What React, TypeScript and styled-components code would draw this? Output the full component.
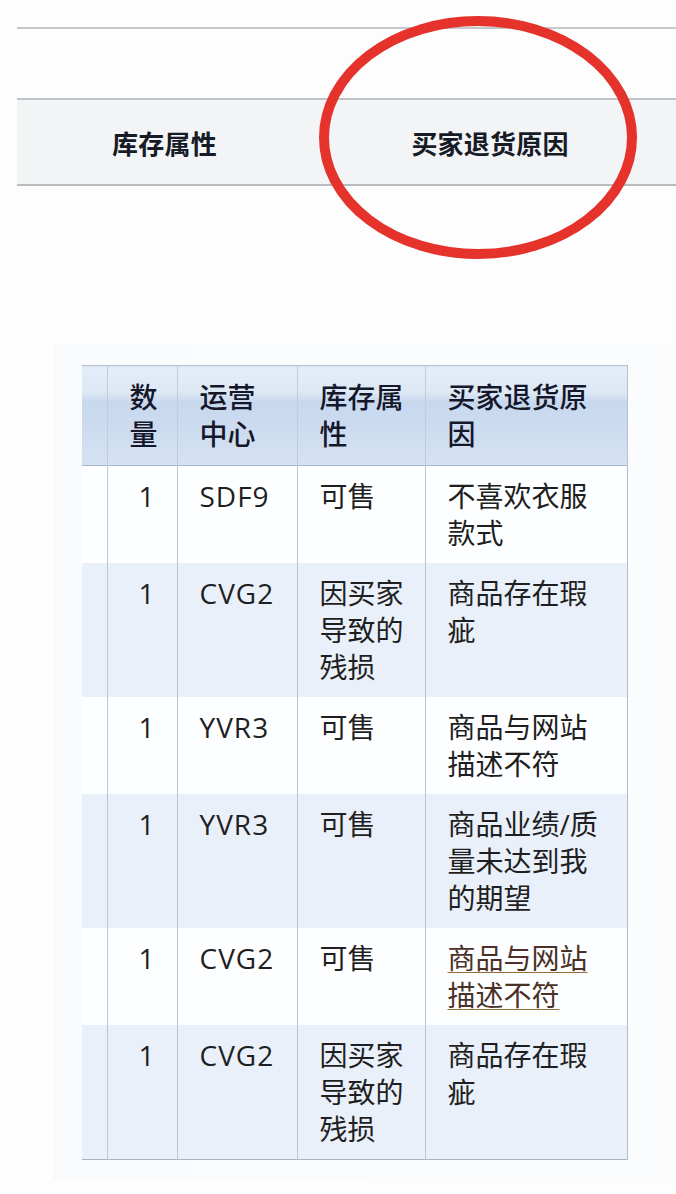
import React from "react";
import styled, { createGlobalStyle } from "styled-components";

const Global = createGlobalStyle`
  html, body {
    margin: 0;
    padding: 0;
    background: #fdfdfe;
  }
  body {
    font-family: "Noto Sans CJK SC", "Noto Sans", sans-serif;
    color: #1c1c1e;
  }
`;

const Page = styled.div`
  position: relative;
  width: 676px;
  min-height: 1194px;
  overflow: hidden;
  background: #fdfdfe;
`;

const TopSection = styled.section`
  padding: 27px 0 0 17px;
  display: flex;
  flex-direction: column;
`;

const Rule = styled.div`
  height: 2px;
  background: #c4c7cb;
`;

const Band = styled.div`
  margin-top: 69px;
  height: 84px;
  border-top: 2px solid #bfc2c6;
  border-bottom: 2px solid #b8bbc0;
  background: #f3f4f6;
  display: grid;
  grid-template-columns: 295px 356px;
  align-items: center;
`;

const BandLabel = styled.div`
  text-align: center;
  font-size: 26px;
  font-weight: 700;
  color: #161b26;
  letter-spacing: 0.2px;
`;

const Annotation = styled.svg`
  position: absolute;
  left: 0;
  top: 0;
  pointer-events: none;
`;

const Panel = styled.section`
  margin: 158px 6px 14px 53px;
  padding: 21px 0 20px 29px;
  background: linear-gradient(to right, #f8f9fa 0px, #fafbfc 20px, #fbfcfd 100%);
`;

const Table = styled.table`
  border-collapse: collapse;
  table-layout: fixed;
  width: 545px;
  font-family: "Open Sans", "Noto Sans CJK SC", sans-serif;
  font-size: 28px;
  line-height: 37px;
  color: #1f1f22;
`;

const Col = styled.col<{ $w: number }>`
  width: ${(p) => p.$w}px;
`;

const HeadRow = styled.tr`
  background: linear-gradient(
    to bottom,
    #e4edf8 0%,
    #dde8f5 26%,
    #c7d8ee 36%,
    #cbdaef 55%,
    #d5e2f3 100%
  );
  border-top: 1px solid #bac4cf;
  border-bottom: 1px solid #a9b8c9;
`;

const Th = styled.th<{ $first?: boolean; $last?: boolean; $pr?: number }>`
  padding: 12px ${(p) => p.$pr ?? 22}px 13px 22px;
  text-align: left;
  vertical-align: top;
  font-family: "Noto Sans CJK SC", sans-serif;
  font-weight: 500;
  color: #15172a;
  word-break: break-all;
  border-left: ${(p) => (p.$first ? "none" : "1px solid #c2ccd8")};
  border-right: ${(p) => (p.$last ? "1px solid #b7c1cc" : "none")};
  &:first-child {
    padding: 0;
  }
`;

const Tr = styled.tr<{ $alt?: boolean }>`
  background: ${(p) => (p.$alt ? "#e9f0fa" : "#fdfeff")};
  &:last-child {
    border-bottom: 1px solid #aab3be;
  }
`;

const Td = styled.td<{
  $first?: boolean;
  $last?: boolean;
  $align?: "left" | "right";
  $pr?: number;
}>`
  padding: 12px ${(p) => p.$pr ?? 22}px 11px 22px;
  text-align: ${(p) => p.$align ?? "left"};
  vertical-align: top;
  word-break: break-all;
  border-left: ${(p) => (p.$first ? "none" : "1px solid #bcc5d0")};
  border-right: ${(p) => (p.$last ? "1px solid #b3bcc7" : "none")};
  &:first-child {
    padding: 0;
  }
`;

const Code = styled.span`
  letter-spacing: 1px;
  white-space: nowrap;
  word-break: keep-all;
`;

const Reason = styled.span<{ $link?: boolean }>`
  color: ${(p) => (p.$link ? "#4a3127" : "inherit")};
  text-decoration: ${(p) => (p.$link ? "underline" : "none")};
  text-decoration-color: #9c6b3a;
  text-decoration-thickness: 1px;
  text-underline-offset: 3px;
`;

type Row = {
  qty: string;
  center: string;
  attr: string;
  reason: string;
  link?: boolean;
};

const rows: Row[] = [
  { qty: "1", center: "SDF9", attr: "可售", reason: "不喜欢衣服款式" },
  { qty: "1", center: "CVG2", attr: "因买家导致的残损", reason: "商品存在瑕疵" },
  { qty: "1", center: "YVR3", attr: "可售", reason: "商品与网站描述不符" },
  { qty: "1", center: "YVR3", attr: "可售", reason: "商品业绩/质量未达到我的期望" },
  { qty: "1", center: "CVG2", attr: "可售", reason: "商品与网站描述不符", link: true },
  { qty: "1", center: "CVG2", attr: "因买家导致的残损", reason: "商品存在瑕疵" },
];

export default function App() {
  return (
    <Page>
      <Global />
      <TopSection>
        <Rule />
        <Band>
          <BandLabel>库存属性</BandLabel>
          <BandLabel>买家退货原因</BandLabel>
        </Band>
      </TopSection>

      <Panel>
        <Table>
          <colgroup>
            <Col $w={25} />
            <Col $w={70} />
            <Col $w={120} />
            <Col $w={128} />
            <Col $w={202} />
          </colgroup>
          <thead>
            <HeadRow>
              <Th $first />
              <Th $pr={21}>数量</Th>
              <Th $pr={30}>运营中心</Th>
              <Th $pr={20}>库存属性</Th>
              <Th $last>买家退货原因</Th>
            </HeadRow>
          </thead>
          <tbody>
            {rows.map((r, i) => (
              <Tr key={i} $alt={i % 2 === 1}>
                <Td $first />
                <Td $align="right" $pr={22}>
                  {r.qty}
                </Td>
                <Td $pr={30}>
                  <Code>{r.center}</Code>
                </Td>
                <Td $pr={20}>{r.attr}</Td>
                <Td $last>
                  <Reason $link={r.link}>{r.reason}</Reason>
                </Td>
              </Tr>
            ))}
          </tbody>
        </Table>
      </Panel>

      <Annotation width="676" height="280" viewBox="0 0 676 280">
        <ellipse
          cx="478"
          cy="137.5"
          rx="154"
          ry="116.5"
          fill="none"
          stroke="#e5332c"
          strokeWidth="10"
        />
      </Annotation>
    </Page>
  );
}
